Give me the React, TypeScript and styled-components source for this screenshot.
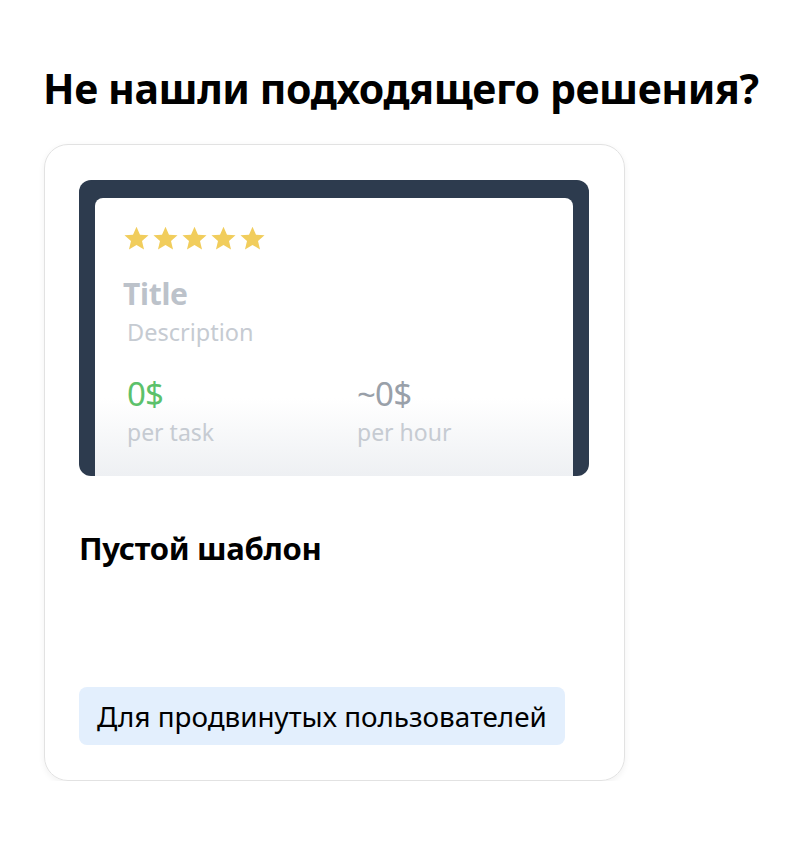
import React from "react";
import styled, { createGlobalStyle } from "styled-components";

const GlobalStyle = createGlobalStyle`
  body {
    margin: 0;
    background: #fff;
    font-family: "Noto Sans", "Open Sans", sans-serif;
    color: #000;
  }
`;

const Page = styled.div`
  padding: 60px 0 0 43px;
`;

const Heading = styled.h2`
  margin: 0 0 28px;
  font-size: 41px;
  font-weight: 700;
  line-height: 56px;
  letter-spacing: -0.4px;
  white-space: nowrap;
`;

const Card = styled.div`
  box-sizing: border-box;
  width: 581px;
  height: 637px;
  margin-left: 1px;
  padding: 35px 35px 35px 34px;
  border: 1px solid #e2e2e2;
  border-radius: 24px;
  box-shadow: 0 2px 6px rgba(0, 0, 0, 0.06);
  display: flex;
  flex-direction: column;
`;

const Preview = styled.div`
  width: 510px;
  height: 296px;
  border-radius: 12px;
  background: #2d3b4e;
  padding: 18px 16px 0;
  box-sizing: border-box;
  overflow: hidden;
  display: flex;
`;

const Screen = styled.div`
  flex: 1;
  border-radius: 8px 8px 0 0;
  background: linear-gradient(180deg, #ffffff 0%, #ffffff 72%, #eef0f3 100%);
  padding: 27px 28px 0 28px;
  display: flex;
  flex-direction: column;
`;

const Stars = styled.div`
  display: flex;
  gap: 2px;
  height: 27px;
`;

const Star = () => (
  <svg width="27" height="27" viewBox="0 0 24 24">
    <path
      d="M12 1.5l3.1 7.1 7.6.6-5.8 5 1.8 7.5L12 17.7l-6.7 4 1.8-7.5-5.8-5 7.6-.6z"
      fill="#f1cd5c"
    />
  </svg>
);

const PreviewTitle = styled.div`
  margin-top: 24px;
  font-size: 30px;
  font-weight: 700;
  color: #bcc2ca;
  line-height: 36px;
  letter-spacing: -0.3px;
`;

const PreviewDesc = styled.div`
  margin-top: 4px;
  padding-left: 4px;
  font-size: 23.5px;
  color: #c6cbd2;
  line-height: 32px;
`;

const Stats = styled.div`
  display: grid;
  grid-template-columns: 230px 1fr;
  margin-top: 28px;
  padding-left: 4px;
`;

const Stat = styled.div`
  display: flex;
  flex-direction: column;
`;

const Amount = styled.div<{ $green?: boolean }>`
  font-size: 33px;
  line-height: 36px;
  letter-spacing: -0.8px;
  color: ${(p) => (p.$green ? "#5cc16b" : "#99a0a9")};
`;

const Unit = styled.div`
  margin-top: 5px;
  font-size: 23px;
  line-height: 30px;
  color: #c6cbd2;
`;

const CardTitle = styled.h3`
  margin: 52px 0 0;
  font-size: 31px;
  font-weight: 700;
  line-height: 40px;
  letter-spacing: -0.3px;
`;

const Tag = styled.div`
  margin-top: auto;
  align-self: flex-start;
  box-sizing: border-box;
  height: 58px;
  padding: 0 18px;
  border-radius: 8px;
  background: #e3effd;
  font-size: 27.8px;
  display: flex;
  align-items: center;
`;

export default function App() {
  return (
    <>
      <GlobalStyle />
      <Page>
        <Heading>Не нашли подходящего решения?</Heading>
        <Card>
          <Preview>
            <Screen>
              <Stars>
                {[0, 1, 2, 3, 4].map((i) => (
                  <Star key={i} />
                ))}
              </Stars>
              <PreviewTitle>Title</PreviewTitle>
              <PreviewDesc>Description</PreviewDesc>
              <Stats>
                <Stat>
                  <Amount $green>0$</Amount>
                  <Unit>per task</Unit>
                </Stat>
                <Stat>
                  <Amount>~0$</Amount>
                  <Unit>per hour</Unit>
                </Stat>
              </Stats>
            </Screen>
          </Preview>
          <CardTitle>Пустой шаблон</CardTitle>
          <Tag>Для продвинутых пользователей</Tag>
        </Card>
      </Page>
    </>
  );
}
